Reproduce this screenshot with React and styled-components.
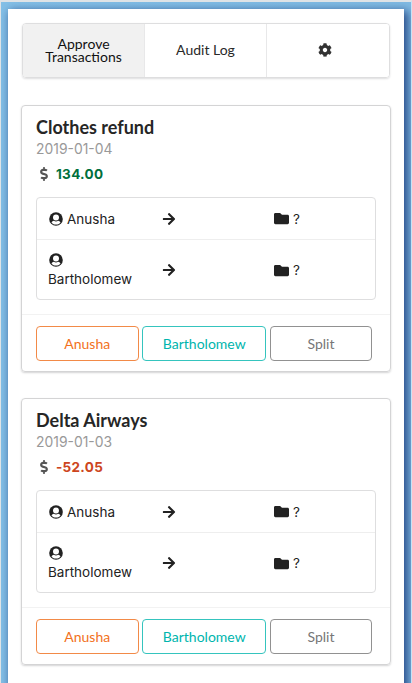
import React from 'react';
import styled, { createGlobalStyle } from 'styled-components';
import { FaCog, FaDollarSign, FaArrowRight, FaFolder } from 'react-icons/fa';

const GlobalStyle = createGlobalStyle`
  *, *::before, *::after { box-sizing: border-box; }
  html, body { margin: 0; height: 100%; overflow: hidden; }
  body { font-family: Lato, sans-serif; font-size: 14px; color: #222; }
`;

const Backdrop = styled.div`
  height: 683px;
  overflow: hidden;
  padding: 7px 3px 0 7px;
  border: solid #dfe3e6;
  border-width: 2px 1px 0 1px;
  border-right-color: #c4e3f7;
  background: linear-gradient(90deg, #84c0e7, #80bbe3);
`;

const Paper = styled.main`
  width: 396px;
  height: 700px;
  padding: 14px 13px;
  background: #fff;
  box-shadow: 3px 3px 9px 1px rgba(10, 36, 106, 0.75);
`;

const Tabs = styled.nav`
  display: grid;
  grid-template-columns: 122px 122px 1fr;
  width: 368px;
  height: 55px;
  margin: 0 0 27px 1px;
  border: 1px solid #dededf;
  border-radius: 4px;
  box-shadow: 0 1px 2px rgba(34, 36, 38, 0.15);
  overflow: hidden;
`;

const Tab = styled.button`
  display: flex;
  align-items: center;
  justify-content: center;
  padding: ${(p) => (p.$last ? '0 20px 2px 14px' : '0 14px 2px')};
  border: 0;
  border-right: ${(p) => (p.$last ? 0 : '1px solid #e8e8e9')};
  background: ${(p) => (p.$active ? '#f1f1f1' : '#fff')};
  color: ${(p) => (p.$active ? '#111' : '#292929')};
  font: 14px/13px Lato, sans-serif;
  svg { color: #333; }
`;

const Card = styled.article`
  height: 267px;
  margin-bottom: 26px;
  border: 1px solid #d4d4d5;
  border-radius: 4px;
  box-shadow: 0 1px 2px #d4d4d5;
`;

const Content = styled.div`
  height: 209px;
  padding: 10px 14px 0;
  border-bottom: 1px solid #f2f2f2;
`;

const Title = styled.h2`
  margin: 0;
  font: 700 18px/23px Lato, sans-serif;
  color: #262626;
`;

const DateText = styled.div`
  margin-top: 1px;
  font: 13.9px/18px Inter, sans-serif;
  color: #999;
`;

const Amount = styled.div`
  display: flex;
  align-items: center;
  gap: 5px;
  height: 18px;
  margin-top: 7px;
  padding-left: 1px;
  font: 700 13.5px/18px Inter, sans-serif;
  letter-spacing: 0.3px;
  color: ${(p) => (p.$negative ? '#cd4520' : '#00703c')};
  svg { color: #555; }
`;

const Table = styled.div`
  height: 103px;
  margin-top: 14px;
  border: 1px solid #dededf;
  border-radius: 4px;
  font: 13.5px/20px Inter, sans-serif;
`;

const Row = styled.div`
  display: grid;
  grid-template-columns: 113px 112px 1fr;
  align-items: center;
  height: ${(p) => (p.$tall ? 60 : 42)}px;
  border-bottom: ${(p) => (p.$tall ? 0 : '1px solid #eee')};
`;

const Cell = styled.div`
  display: flex;
  flex-wrap: wrap;
  align-items: center;
  gap: 2px 4px;
  padding-top: ${(p) => (p.$drop ? 2 : 0)}px;
  padding-left: ${(p) => p.$inset}px;
`;

const Name = styled.span`
  margin-left: ${(p) => (p.$wrapped ? -1 : 0)}px;
`;

const Actions = styled.div`
  display: grid;
  grid-template-columns: 102.500px 124px 102px;
  gap: 3.750px;
  padding: 11px 14px;
`;

const Button = styled.button`
  height: 35px;
  padding: 0;
  border: 1px solid ${(p) => p.$border};
  border-radius: 4px;
  background: #fff;
  color: ${(p) => p.$color};
  font: 14px/17px Lato, sans-serif;
`;

function UserIcon() {
  return (
    <svg width="14" height="14" viewBox="0 0 14 14">
      <circle cx="7" cy="7" r="6.8" fill="#222" />
      <circle cx="7" cy="5.6" r="3" fill="#fff" />
      <path d="M2.5 10.4c.6-1 1.400-1.500 2.400-1.600 1.300.8 2.900.8 4.200 0 1 .1 1.800.6 2.400 1.600C10.300 11.900 8.700 12.600 7 12.600s-3.300-.7-4.500-2.200z" fill="#fff" />
    </svg>
  );
}

const transactions = [
  { title: 'Clothes refund', date: '2019-01-04', amount: '134.00' },
  { title: 'Delta Airways', date: '2019-01-03', amount: '-52.05' },
];

function Person({ name, tall }) {
  return (
    <Row $tall={tall}>
      <Cell $inset={12} $drop={tall}><UserIcon /><Name $wrapped={tall}>{name}</Name></Cell>
      <Cell $inset={12}><FaArrowRight size={14} /></Cell>
      <Cell $inset={12}><FaFolder size={15} />?</Cell>
    </Row>
  );
}

function Transaction({ title, date, amount }) {
  return (
    <Card>
      <Content>
        <Title>{title}</Title>
        <DateText>{date}</DateText>
        <Amount $negative={amount.startsWith('-')}><FaDollarSign size={14} />{amount}</Amount>
        <Table>
          <Person name="Anusha" />
          <Person name="Bartholomew" tall />
        </Table>
      </Content>
      <Actions>
        <Button $color="#f2711c" $border="#f28a48">Anusha</Button>
        <Button $color="#00b5ad" $border="#35c4be">Bartholomew</Button>
        <Button $color="#767676" $border="#919191">Split</Button>
      </Actions>
    </Card>
  );
}

export default function App() {
  return (
    <>
      <GlobalStyle />
      <Backdrop>
        <Paper>
          <Tabs>
            <Tab $active>Approve Transactions</Tab>
            <Tab>Audit Log</Tab>
            <Tab $last aria-label="Settings"><FaCog size={14} /></Tab>
          </Tabs>
          {transactions.map((t) => <Transaction key={t.title} {...t} />)}
        </Paper>
      </Backdrop>
    </>
  );
}
